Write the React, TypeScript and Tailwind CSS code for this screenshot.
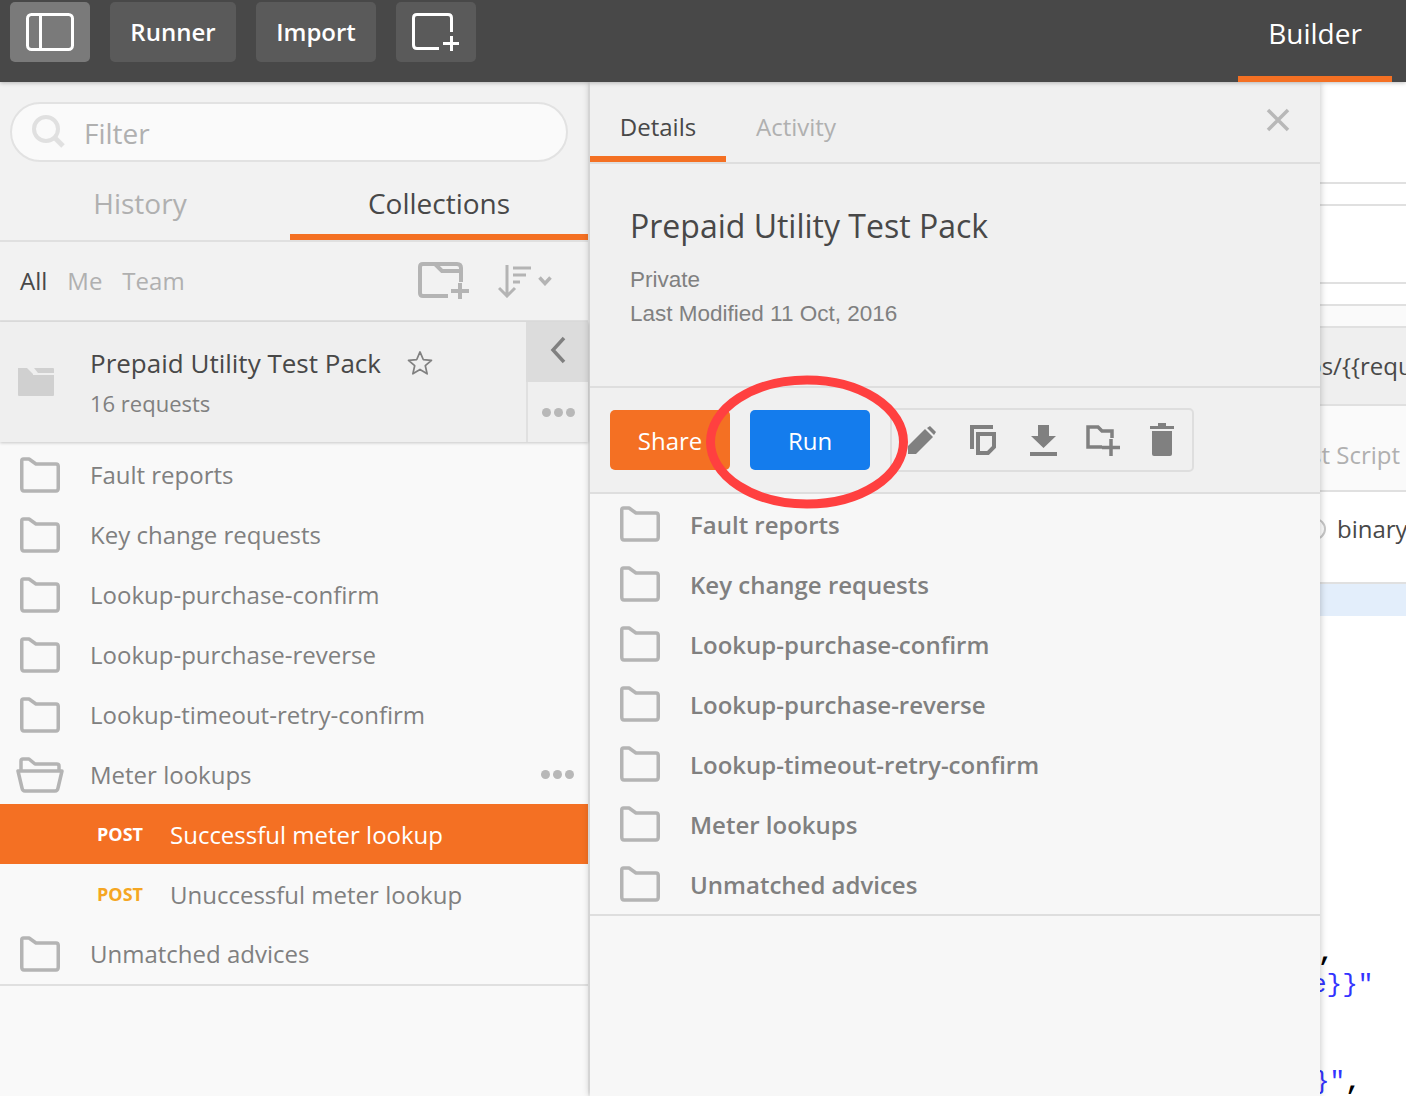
const folders = ['Fault reports', 'Key change requests', 'Lookup-purchase-confirm', 'Lookup-purchase-reverse', 'Lookup-timeout-retry-confirm'];
const detailFolders = [...folders, 'Meter lookups', 'Unmatched advices'];

function FolderIcon() {
  return (
    <svg width="40" height="36" viewBox="0 0 40 36" fill="none" stroke="#b4b4b4" strokeWidth="3.5" strokeLinejoin="round">
      <path d="M1.75 4 Q1.75 2 3.5 2 L9 2 L16 7 L36 7 Q38.25 7 38.25 9.5 L38.25 31 Q38.25 34 36 34 L4 34 Q1.75 34 1.75 31 Z" />
    </svg>
  );
}

function OpenFolderIcon() {
  return (
    <svg width="48" height="36" viewBox="0 0 48 36" fill="none" stroke="#b4b4b4" strokeWidth="3.5" strokeLinejoin="round">
      <path d="M5 14 L5 4 Q5 2 7 2 L13 2 L19 7 L41 7 Q43 7 43 9 L43 14" />
      <path d="M2 14 L46 14 L42 31 Q41.5 34 39 34 L9 34 Q6.5 34 6 31 Z" />
    </svg>
  );
}

function Dots() {
  return (
    <div className="flex gap-[3px]">
      <span className="w-[9px] h-[9px] rounded-full bg-[#b8b8b8]" />
      <span className="w-[9px] h-[9px] rounded-full bg-[#b8b8b8]" />
      <span className="w-[9px] h-[9px] rounded-full bg-[#b8b8b8]" />
    </div>
  );
}

function SidebarRow({ label }: { label: string }) {
  return (
    <div className="h-[60px] flex items-center pl-5">
      <FolderIcon />
      <span className="ml-[30px] text-[24px] text-[#808080]">{label}</span>
    </div>
  );
}

function Header() {
  return (
    <div className="relative z-20 h-[82px] shrink-0 bg-[#484848] flex items-start pl-[10px] pt-[2px] pr-[14px] gap-5 shadow-[0_1px_4px_rgba(0,0,0,0.25)]">
      <button className="w-20 h-[60px] rounded-[5px] bg-[#7a7a7a] flex items-center justify-center">
        <svg width="48" height="38" viewBox="0 0 48 38" fill="none" stroke="#fff" strokeWidth="3">
          <rect x="1.5" y="1.5" width="45" height="35" rx="4" />
          <path d="M14.5 1.5 L14.5 36.5" />
        </svg>
      </button>
      <button className="w-[126px] h-[60px] rounded-[5px] bg-[#5a5a5a] text-white font-semibold text-[24px]">Runner</button>
      <button className="w-[120px] h-[60px] rounded-[5px] bg-[#5a5a5a] text-white font-semibold text-[24px]">Import</button>
      <button className="w-20 h-[60px] rounded-[5px] bg-[#5a5a5a] flex items-center justify-center">
        <svg width="48" height="38" viewBox="0 0 48 38" fill="none" stroke="#fff" strokeWidth="3">
          <path d="M27 35.5 L5 35.5 Q1.5 35.5 1.5 32 L1.5 5 Q1.5 1.5 5 1.5 L36 1.5 Q39.5 1.5 39.5 5 L39.5 19" />
          <path d="M39.5 23 L39.5 38 M31 30.5 L47 30.5" />
        </svg>
      </button>
      <div className="ml-auto w-[154px] h-20 pb-3 border-b-[6px] border-[#f47023] flex items-center justify-center text-white text-[28px]">
        Builder
      </div>
    </div>
  );
}

function Sidebar() {
  return (
    <div className="relative z-[5] w-[588px] shrink-0 flex flex-col bg-[#f9f9f9] shadow-[2px_0_3px_rgba(0,0,0,0.1)]">
      <div className="bg-[#f2f2f2]">
        <div className="px-[10px] pt-5">
          <div className="h-[60px] w-[558px] rounded-full border-2 border-[#e2e2e2] bg-[#fafafa] flex items-center pl-5">
            <svg width="34" height="34" viewBox="0 0 34 34" fill="none" stroke="#e0e0e0">
              <circle cx="14" cy="14" r="12" strokeWidth="4" />
              <path d="M23 23 L31 31" strokeWidth="5" />
            </svg>
            <span className="ml-[18px] pt-[2px] text-[28px] text-[#b0b0b0]">Filter</span>
          </div>
        </div>
        <div className="h-[80px] flex border-b-2 border-[#e0e0e0]">
          <div className="w-[280px] pt-1 flex items-center justify-center text-[28px] text-[#b0b0b0]">History</div>
          <div className="ml-[10px] w-[298px] h-[78px] pt-[10px] flex items-center justify-center text-[28px] text-[#484848] border-b-[6px] border-[#f47023]">Collections</div>
        </div>
        <div className="h-[80px] flex items-center pl-5 border-b-2 border-[#e0e0e0]">
          <span className="text-[24px] text-[#484848]">All</span>
          <span className="ml-5 text-[24px] text-[#b0b0b0]">Me</span>
          <span className="ml-5 text-[24px] text-[#b0b0b0]">Team</span>
          <svg className="ml-auto" width="52" height="38" viewBox="0 0 52 38" fill="none" stroke="#b4b4b4" strokeWidth="4">
            <path d="M30 34 L5 34 Q2 34 2 31 L2 5 Q2 2 5 2 L39 2 Q43 2 43 6 L43 20" />
            <path d="M17 2 L24 9 L43 9" />
            <path d="M42 21 L42 37 M33 29 L51 29" />
          </svg>
          <svg className="ml-[28px]" width="34" height="34" viewBox="0 0 34 34" fill="none" stroke="#b4b4b4" strokeWidth="3">
            <path d="M9 1 L9 32 M1 24 L9 32 L17 24" />
            <path d="M15 4 L33 4 M15 11 L28 11 M15 18 L22 18" />
          </svg>
          <svg className="ml-[6px] mr-[36px]" width="14" height="10" viewBox="0 0 14 10" fill="none" stroke="#b4b4b4" strokeWidth="3.5">
            <path d="M1.5 1.5 L7 7.5 L12.5 1.5" />
          </svg>
        </div>
      </div>
      <div className="relative z-10 h-[120px] flex bg-[#efefef] shadow-[0_1px_3px_rgba(0,0,0,0.2)]">
        <div className="w-[526px] flex items-center pl-[18px]">
          <svg width="36" height="30" viewBox="0 0 36 30" fill="#d0d0d0">
            <path d="M0 1 L9 1 L15 7 L15 8 L36 8 L36 28 Q36 29 35 29 L1 29 Q0 29 0 28 Z" />
            <path d="M16 1 L35 1 Q36 1 36 2 L36 6 L20 6 Z" />
          </svg>
          <div className="ml-9 pt-[2px] flex flex-col">
            <div className="flex items-center">
              <span className="text-[26px] leading-[40px] text-[#484848]">Prepaid Utility Test Pack</span>
              <svg className="ml-[26px]" width="26" height="26" viewBox="0 0 24 24" fill="none" stroke="#808080" strokeWidth="1.6" strokeLinejoin="round">
                <path d="M12 1.8 L15 8.8 L22.6 9.5 L16.9 14.5 L18.6 22 L12 18 L5.4 22 L7.1 14.5 L1.4 9.5 L9 8.8 Z" />
              </svg>
            </div>
            <span className="text-[22px] leading-[40px] text-[#808080]">16 requests</span>
          </div>
        </div>
        <div className="w-[62px] flex flex-col">
          <div className="h-[60px] bg-[#dcdcdc] flex items-start justify-center pt-[14px] pl-[2px]">
            <svg width="18" height="28" viewBox="0 0 18 28" fill="none" stroke="#808080" strokeWidth="3.5">
              <path d="M15 2 L4 14 L15 26" />
            </svg>
          </div>
          <div className="h-[60px] border-l-2 border-[#e0e0e0] flex items-center justify-center">
            <Dots />
          </div>
        </div>
      </div>
      <div className="pt-[3px] border-b-2 border-[#e0e0e0]">
        {folders.map((f) => (
          <SidebarRow key={f} label={f} />
        ))}
        <div className="h-[59px] flex items-center pl-4 pr-[14px]">
          <OpenFolderIcon />
          <span className="ml-[26px] text-[24px] text-[#808080]">Meter lookups</span>
          <div className="ml-auto"><Dots /></div>
        </div>
        <div className="h-[60px] bg-[#f47023] flex items-center pl-[97px] text-white">
          <span className="w-[73px] text-[18px] font-bold">POST</span>
          <span className="pt-[2px] text-[24px]">Successful meter lookup</span>
        </div>
        <div className="h-[60px] flex items-center pl-[97px]">
          <span className="w-[73px] text-[18px] font-bold text-[#f5a623]">POST</span>
          <span className="pt-[2px] text-[24px] text-[#808080]">Unuccessful meter lookup</span>
        </div>
        <SidebarRow label="Unmatched advices" />
      </div>
    </div>
  );
}

function DetailsPanel() {
  return (
    <div className="relative z-10 ml-[2px] w-[730px] shrink-0 flex flex-col bg-[#f7f7f7] shadow-[0_0_7px_rgba(0,0,0,0.25)]">
      <div className="bg-[#f0f0f0]">
        <div className="h-[82px] flex border-b-2 border-[#dedede]">
          <div className="w-[136px] h-20 pt-4 flex items-center justify-center text-[24px] text-[#484848] border-b-[6px] border-[#f47023]">Details</div>
          <div className="ml-[30px] h-20 pt-[10px] flex items-center text-[24px] text-[#b0b0b0]">Activity</div>
          <svg className="ml-auto mr-[30px] mt-[26px]" width="24" height="24" viewBox="0 0 24 24" fill="none" stroke="#b8b8b8" strokeWidth="3.5">
            <path d="M2 2 L22 22 M22 2 L2 22" />
          </svg>
        </div>
        <div className="h-[224px] pl-10 pt-[40px] border-b-2 border-[#dedede]">
          <div className="text-[32px] leading-[44px] text-[#484848]">Prepaid Utility Test Pack</div>
          <div className="mt-[15px] font-['Liberation_Sans',sans-serif] text-[22.5px] leading-[34px] text-[#808080]">Private</div>
          <div className="font-['Liberation_Sans',sans-serif] text-[22.5px] leading-[34px] text-[#808080]">Last Modified 11 Oct, 2016</div>
        </div>
        <div className="h-[106px] flex items-center pl-5 border-b-2 border-[#dedede]">
          <button className="w-[120px] h-[60px] pt-[1px] rounded-[5px] bg-[#f47023] text-white text-[24px]">Share</button>
          <button className="ml-5 w-[120px] h-[60px] pt-[1px] rounded-[5px] bg-[#147ced] text-white text-[24px]">Run</button>
          <div className="ml-5 w-[304px] h-[64px] rounded-[5px] border-2 border-[#dedede] flex items-center pl-4">
            <svg width="28" height="28" viewBox="0 0 28 28" fill="#808080">
              <path d="M0 28 L0 20 L17 3 L25 11 L8 28 Z" />
              <path d="M19 2 L22 0 L28 6 L26 9 Z" />
            </svg>
            <svg className="ml-[34px]" width="26" height="30" viewBox="0 0 26 30" fill="none" stroke="#808080" strokeWidth="4">
              <path d="M2 24 L2 2 L23 2" />
              <path d="M8 9 L24 9 L24 22 L18 28 L8 28 Z" />
            </svg>
            <svg className="ml-[34px]" width="27" height="31" viewBox="0 0 27 31" fill="#808080">
              <path d="M8 0 L19 0 L19 11 L26 11 L13.5 23 L1 11 L8 11 Z" />
              <rect x="0" y="27" width="27" height="4" />
            </svg>
            <svg className="ml-[29px]" width="34" height="31" viewBox="0 0 34 31" fill="none" stroke="#808080" strokeWidth="3.5">
              <path d="M16 22 L2 22 L2 2 L12 2 L16 6 L26 6 L26 13" />
              <path d="M25 14 L25 31 M16 22.5 L34 22.5" />
            </svg>
            <svg className="ml-[30px]" width="24" height="34" viewBox="0 0 24 34" fill="#808080">
              <path d="M0 3 L8 3 L8 0 L16 0 L16 3 L24 3 L24 6 L0 6 Z" />
              <path d="M2 8 L22 8 L22 31 Q22 33 20 33 L4 33 Q2 33 2 31 Z" />
            </svg>
          </div>
        </div>
      </div>
      <div className="border-b-2 border-[#dedede]">
        {detailFolders.map((f) => (
          <div key={f} className="h-[60px] flex items-center pl-[30px]">
            <FolderIcon />
            <span className="ml-[30px] pt-[1px] text-[24px] font-semibold text-[#808080]">{f}</span>
          </div>
        ))}
      </div>
    </div>
  );
}

function BuilderPeek() {
  return (
    <div className="flex-1 min-w-0 bg-white overflow-hidden flex flex-col">
      <div className="h-[102px] shrink-0 border-b-2 border-[#e0e0e0]" />
      <div className="h-[22px] shrink-0 border-b-2 border-[#e0e0e0]" />
      <div className="h-[78px] shrink-0 border-b-2 border-[#e0e0e0]" />
      <div className="h-[22px] shrink-0 border-b-2 border-[#e0e0e0]" />
      <div className="h-[22px] shrink-0 bg-[#fafafa] border-b-2 border-[#e0e0e0]" />
      <div className="h-[78px] shrink-0 bg-[#efefef] border-b-2 border-[#e0e0e0] flex items-center overflow-hidden">
        <span className="-ml-[13px] text-[24px] text-[#484848] whitespace-nowrap">ps/{'{{'}request</span>
      </div>
      <div className="h-[86px] shrink-0 pt-[14px] bg-[#fafafa] border-b-2 border-[#e0e0e0] flex items-center overflow-hidden">
        <span className="-ml-[10px] text-[24px] text-[#b0b0b0] whitespace-nowrap">st Script</span>
      </div>
      <div className="h-[92px] shrink-0 pb-4 border-b-2 border-[#e0e0e0] flex items-center overflow-hidden">
        <span className="-ml-[16px] w-[22px] h-[22px] shrink-0 rounded-full border-2 border-[#c8c8c8]" />
        <span className="ml-[11px] text-[24px] text-[#484848] whitespace-nowrap">binary</span>
      </div>
      <div className="h-[32px] shrink-0 bg-[#e3eefb]" />
      <div className="pt-[321px] font-['Liberation_Mono',monospace] text-[26px] leading-[32px] whitespace-nowrap">
        <div className="-ml-[2px] font-bold text-black">,</div>
        <div className="-ml-[9px] text-[#3333ff]">e{'}}'}"</div>
        <div className="h-[32px]" />
        <div className="h-[33px]" />
        <div className="-ml-[6px] text-[#3333ff]">{'}'}"<span className="font-bold text-black">,</span></div>
      </div>
    </div>
  );
}

export default function App() {
  return (
    <div className="relative w-[1406px] h-[1096px] overflow-hidden flex flex-col bg-white font-['Open_Sans',sans-serif]">
      <Header />
      <div className="flex-1 min-h-0 flex">
        <Sidebar />
        <DetailsPanel />
        <BuilderPeek />
      </div>
      {/* red annotation drawn over the screenshot */}
      <svg className="absolute left-[700px] top-[370px] z-30" width="216" height="144" viewBox="0 0 216 144" fill="none">
        <ellipse cx="107" cy="72" rx="96.5" ry="62" stroke="#ff4040" strokeWidth="9" />
      </svg>
    </div>
  );
}
